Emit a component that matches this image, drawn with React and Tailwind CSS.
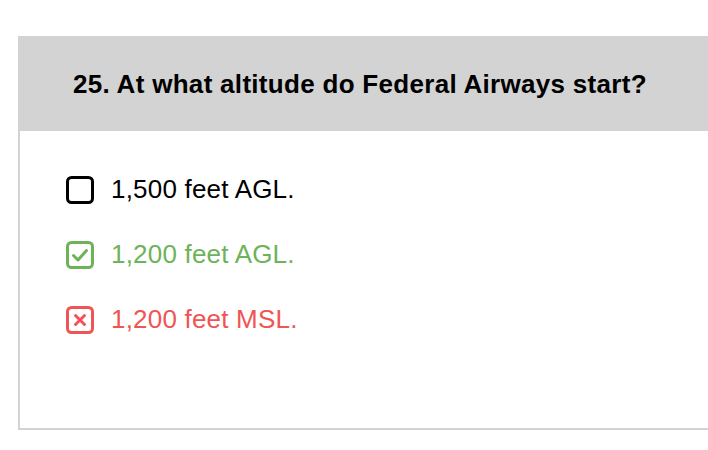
const options = [
  { text: "1,500 feet AGL.", state: "none" },
  { text: "1,200 feet AGL.", state: "correct" },
  { text: "1,200 feet MSL.", state: "wrong" },
];

const Box = ({ state }) => {
  const color =
    state === "correct" ? "#6db359" : state === "wrong" ? "#f05555" : "#000000";
  return (
    <svg width="28" height="28" viewBox="0 0 28 28" fill="none">
      <rect x="1.5" y="1.5" width="25" height="25" rx="4" stroke={color} strokeWidth="3" />
      {state === "correct" && (
        <path d="M7.5 14.5 L12 19 L20.5 9.5" stroke={color} strokeWidth="3" strokeLinecap="round" strokeLinejoin="round" />
      )}
      {state === "wrong" && (
        <path d="M9.5 9.5 L18.5 18.5 M18.5 9.5 L9.5 18.5" stroke={color} strokeWidth="3" strokeLinecap="round" />
      )}
    </svg>
  );
};

const App = () => {
  return (
    <div className="w-[708px] h-[450px] bg-white overflow-hidden font-['Liberation_Sans',Arial,sans-serif]">
      {/* card */}
      <div className="ml-[18px] mt-[36px] w-[760px] h-[394px] border-2 border-[#d3d3d3] flex flex-col">
        <div className="h-[93px] bg-[#d3d3d3] flex items-center pl-[53px]">
          <h2 className="text-[26px] font-bold text-black tracking-[0.3px]">25. At what altitude do Federal Airways start?</h2>
        </div>
        <div className="flex flex-col gap-[36px] pl-[46px] pt-[44px]">
          {options.map((o) => (
            <div key={o.text} className="flex items-center gap-[17px]">
              <Box state={o.state} />
              <span
                className={
                  "text-[26px] leading-[29px] tracking-[0.2px] " +
                  (o.state === "correct"
                    ? "text-[#6db359]"
                    : o.state === "wrong"
                    ? "text-[#f05555]"
                    : "text-black")
                }
              >
                {o.text}
              </span>
            </div>
          ))}
        </div>
      </div>
    </div>
  );
};

export default App;
